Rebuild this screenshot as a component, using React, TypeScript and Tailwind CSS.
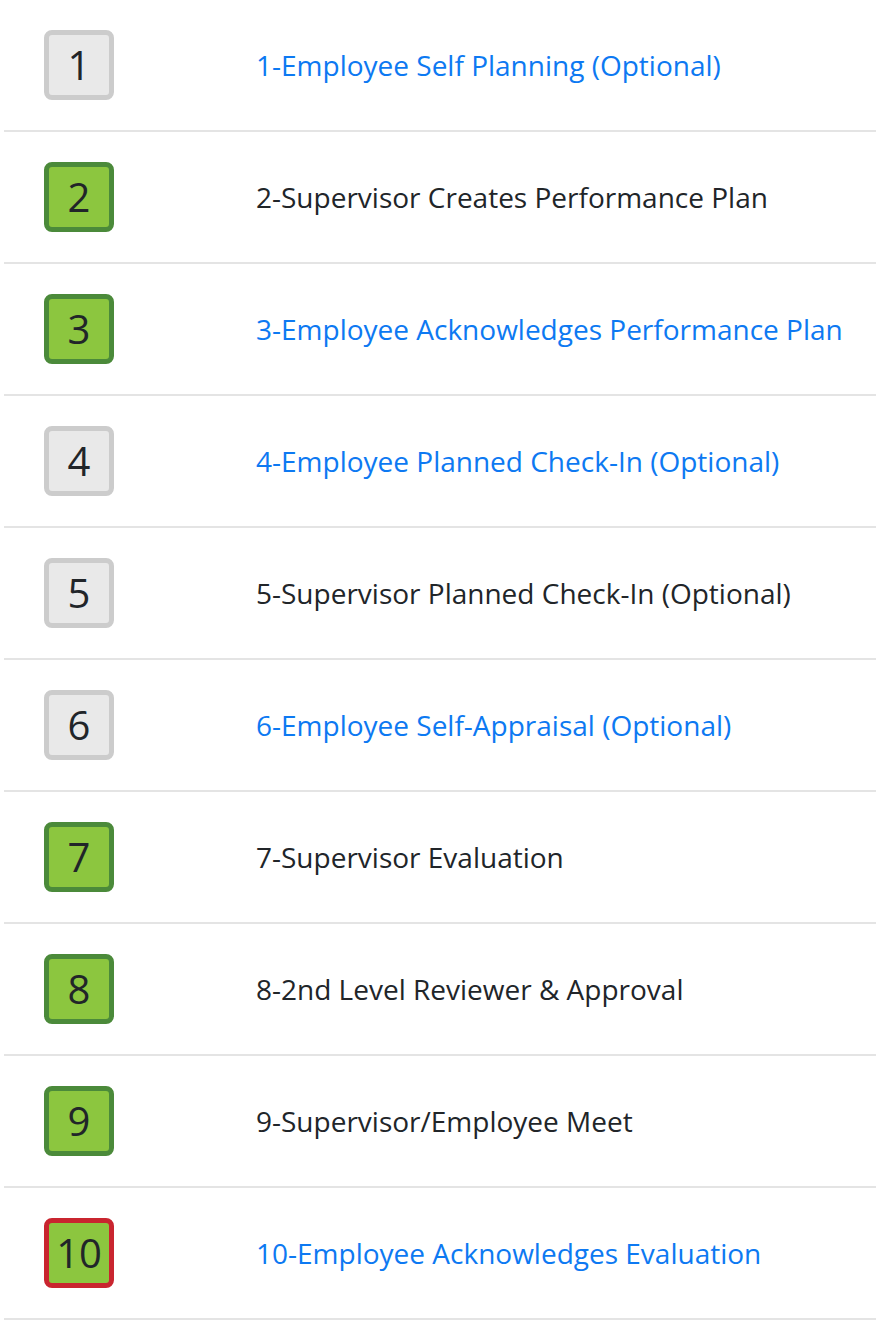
const steps = [
  { n: 1, label: "1-Employee Self Planning (Optional)", state: "todo", link: true },
  { n: 2, label: "2-Supervisor Creates Performance Plan", state: "done", link: false },
  { n: 3, label: "3-Employee Acknowledges Performance Plan", state: "done", link: true },
  { n: 4, label: "4-Employee Planned Check-In (Optional)", state: "todo", link: true },
  { n: 5, label: "5-Supervisor Planned Check-In (Optional)", state: "todo", link: false },
  { n: 6, label: "6-Employee Self-Appraisal (Optional)", state: "todo", link: true },
  { n: 7, label: "7-Supervisor Evaluation", state: "done", link: false },
  { n: 8, label: "8-2nd Level Reviewer & Approval", state: "done", link: false },
  { n: 9, label: "9-Supervisor/Employee Meet", state: "done", link: false },
  { n: 10, label: "10-Employee Acknowledges Evaluation", state: "current", link: true },
];

const boxStyles: Record<string, string> = {
  todo: "bg-[#e9e9e9] border-[#cccccc]",
  done: "bg-[#8cc63f] border-[#4b8a3a]",
  current: "bg-[#8cc63f] border-[#c9252f]",
};

export default function App() {
  return (
    <div className="min-h-[1320px] bg-white pl-1 font-['Open_Sans',sans-serif]">
      {steps.map((s) => (
        <div key={s.n} className="flex h-[132px] items-center border-b-2 border-[#e4e4e4]">
          <div
            className={`ml-10 flex h-[70px] w-[70px] shrink-0 items-center justify-center rounded-lg border-[5px] text-[40px] leading-none text-[#212529] ${boxStyles[s.state]}`}
          >
            {s.n}
          </div>
          {s.link ? (
            <a href="#" className="ml-[142px] whitespace-nowrap text-[28px] text-[#0d79f2]">
              {s.label}
            </a>
          ) : (
            <span className="ml-[142px] whitespace-nowrap text-[28px] text-[#212529]">{s.label}</span>
          )}
        </div>
      ))}
    </div>
  );
}
